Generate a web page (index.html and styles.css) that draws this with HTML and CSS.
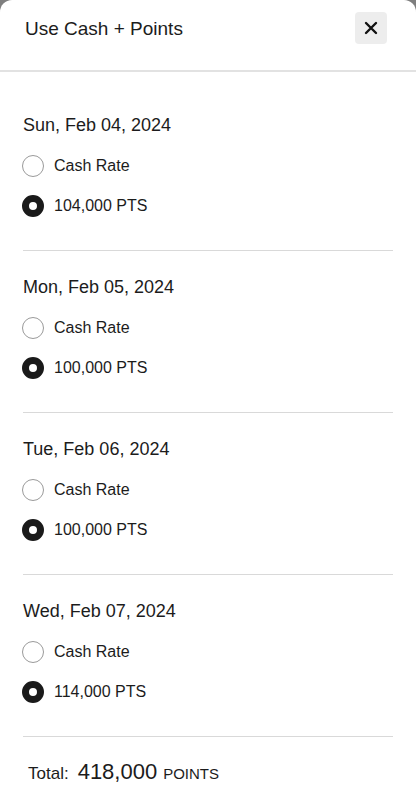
FILE: index.html
```html
<!DOCTYPE html>
<html>
<head>
<meta charset="utf-8">
<link rel="stylesheet" href="styles.css">
</head>
<body>
<div class="sheet">
  <div class="header">
    <div class="title">Use Cash + Points</div>
    <button class="close" aria-label="Close">
      <svg width="14" height="14" viewBox="0 0 14 14"><path d="M2 2L12 12M12 2L2 12" stroke="#111" stroke-width="2.4" stroke-linecap="round"/></svg>
    </button>
  </div>
  <div class="list">
    <div class="day">
      <div class="date">Sun, Feb 04, 2024</div>
      <div class="opt"><span class="radio"></span><span class="label">Cash Rate</span></div>
      <div class="opt"><span class="radio on"></span><span class="label">104,000 PTS</span></div>
    </div>
    <div class="day">
      <div class="date">Mon, Feb 05, 2024</div>
      <div class="opt"><span class="radio"></span><span class="label">Cash Rate</span></div>
      <div class="opt"><span class="radio on"></span><span class="label">100,000 PTS</span></div>
    </div>
    <div class="day">
      <div class="date">Tue, Feb 06, 2024</div>
      <div class="opt"><span class="radio"></span><span class="label">Cash Rate</span></div>
      <div class="opt"><span class="radio on"></span><span class="label">100,000 PTS</span></div>
    </div>
    <div class="day">
      <div class="date">Wed, Feb 07, 2024</div>
      <div class="opt"><span class="radio"></span><span class="label">Cash Rate</span></div>
      <div class="opt"><span class="radio on"></span><span class="label">114,000 PTS</span></div>
    </div>
    <div class="total">
      <span class="t-label">Total:</span>
      <span class="t-num">418,000</span>
      <span class="t-unit">POINTS</span>
    </div>
  </div>
</div>
</body>
</html>
```
FILE: styles.css
```css
html, body {
  margin: 0;
  padding: 0;
  background: #7f7f7f;
  height: 100%;
}
body {
  font-family: "Liberation Sans", Arial, sans-serif;
  color: #1c1c1c;
}
.sheet {
  background: #fff;
  border-radius: 12px 12px 0 0;
  min-height: 800px;
  overflow: hidden;
}
.header {
  height: 70px;
  border-bottom: 2px solid #e2e2e2;
  display: flex;
  align-items: flex-start;
  justify-content: space-between;
  padding: 0 29px 0 25px;
}
.title {
  font-size: 19px;
  line-height: 24px;
  margin-top: 17px;
}
.close {
  width: 32px;
  height: 32px;
  margin-top: 12px;
  border: none;
  border-radius: 4px;
  background: #ededed;
  display: flex;
  align-items: center;
  justify-content: center;
  padding: 0;
}
.list {
  padding: 17px 23px 0 23px;
}
.day {
  padding: 24px 0 24px;
  border-bottom: 1px solid #d9d9d9;
}
.date {
  font-size: 18px;
  line-height: 24px;
  margin-bottom: 9px;
}
.opt {
  height: 40px;
  display: flex;
  align-items: center;
  gap: 10px;
  margin-left: -1px;
}
.radio {
  width: 22px;
  height: 22px;
  box-sizing: border-box;
  border: 1px solid #9a9a9a;
  border-radius: 50%;
  background: #fff;
}
.radio.on {
  border: 7px solid #1a1a1a;
  background: #fff;
}
.label {
  font-size: 16px;
  line-height: 20px;
}
.total {
  display: flex;
  align-items: baseline;
  padding: 22px 0 0 5px;
}
.t-label {
  font-size: 17px;
  margin-right: 9px;
}
.t-num {
  font-size: 22px;
  margin-right: 6px;
}
.t-unit {
  font-size: 15px;
}
```
